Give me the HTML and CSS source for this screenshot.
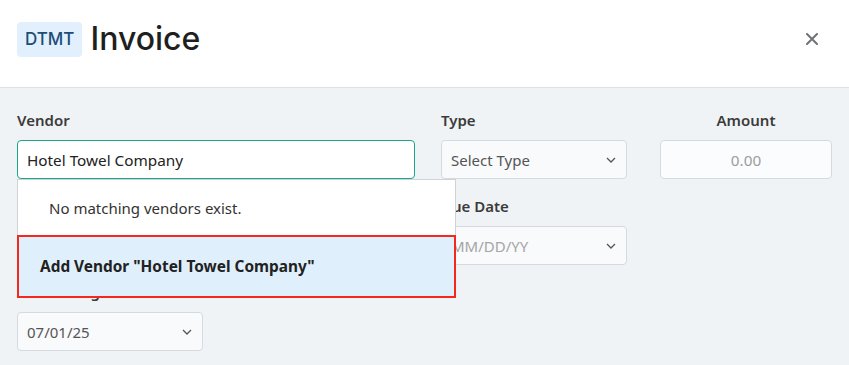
FILE: index.html
```html
<!DOCTYPE html>
<html lang="en">
<head>
	<meta charset="UTF-8">
	<meta name="viewport" content="width=device-width">
	<title>Invoice</title>
	<link rel="stylesheet" href="styles.css">
</head>
<body>
<div class="modal">
	<header class="hdr">
		<span class="badge">DTMT</span>
		<h1 class="title">Invoice</h1>
		<button class="close" aria-label="Close">
			<svg width="12" height="12" viewBox="0 0 12 12"><path d="M1 1L11 11M11 1L1 11" stroke="#6e7378" stroke-width="2" stroke-linecap="round"/></svg>
		</button>
	</header>
	<div class="form">
		<!-- row 1 -->
		<div class="field span2">
			<label class="lbl">Vendor</label>
			<div class="ctl-wrap">
				<input class="inp focus" type="text" value="Hotel Towel Company">
				<div class="menu">
					<div class="menu-empty">No matching vendors exist.</div>
					<div class="menu-add">Add Vendor "Hotel Towel Company"</div>
				</div>
			</div>
		</div>
		<div class="field">
			<label class="lbl">Type</label>
			<div class="sel">
				<span>Select Type</span>
				<svg width="10" height="6" viewBox="0 0 10 6"><path d="M1 1l4 4 4-4" fill="none" stroke="#555" stroke-width="1.3"/></svg>
			</div>
		</div>
		<div class="field amt">
			<label class="lbl center">Amount</label>
			<input class="inp num" type="text" placeholder="0.00">
		</div>
		<!-- row 2 (left part sits under the vendor menu) -->
		<div class="field span2"></div>
		<div class="field">
			<label class="lbl">Due Date</label>
			<div class="sel">
				<span class="ph">MM/DD/YY</span>
				<svg width="10" height="6" viewBox="0 0 10 6"><path d="M1 1l4 4 4-4" fill="none" stroke="#555" stroke-width="1.3"/></svg>
			</div>
		</div>
		<div></div>
		<!-- row 3 -->
		<div class="field">
			<label class="lbl">Accounting Date</label>
			<div class="sel">
				<span>07/01/25</span>
				<svg width="10" height="6" viewBox="0 0 10 6"><path d="M1 1l4 4 4-4" fill="none" stroke="#555" stroke-width="1.3"/></svg>
			</div>
		</div>
	</div>
</div>
</body>
</html>
```

FILE: styles.css
```css
*{box-sizing:border-box;margin:0;padding:0;}
body{font-family:"Noto Sans",Arial,sans-serif;color:#333;background:#f0f3f6;}
.modal{min-height:365px;background:#f0f3f6;}

.hdr{display:flex;align-items:center;height:88px;padding:0 17px 9px;background:#fff;border-bottom:1px solid #dde1e5;}
.badge{display:inline-block;height:35px;line-height:35px;padding:0 8px;border-radius:4px;background:#e1f0fc;color:#1c4c78;font-family:Inter,"Noto Sans",sans-serif;font-size:17px;font-weight:500;}
.title{margin-left:8px;font-family:Inter,"Noto Sans",sans-serif;font-size:32px;font-weight:500;line-height:1;color:#1f1f1f;}
.close{margin-left:auto;margin-right:8px;width:24px;height:24px;display:flex;align-items:center;justify-content:center;border:none;background:none;}

.form{display:grid;grid-template-columns:186px 186px 186px 1fr;column-gap:26px;row-gap:17px;padding:22px 17px 0;}
.field{display:flex;flex-direction:column;min-height:69px;}
.span2{grid-column:span 2;}
.lbl{display:block;height:20px;line-height:20px;margin-bottom:10px;font-size:15px;font-weight:600;color:#3b3b3b;}
.lbl.center{text-align:center;}
.amt{padding-left:7px;}

.inp{height:39px;width:100%;padding:0 9px;border:1px solid #d6dade;border-radius:4px;background:#fbfcfd;font-family:"Noto Sans",Arial,sans-serif;font-size:15.3px;color:#222;outline:none;}
.inp.focus{border-color:#1ba68b;background:#fff;}
.inp.num{text-align:center;}
.inp::placeholder{color:#9c9c9c;}

.sel{display:flex;align-items:center;justify-content:space-between;height:39px;padding:0 10px 0 9px;border:1px solid #d6dade;border-radius:4px;background:#f9fafc;font-size:15px;color:#555;}
.sel .ph{color:#a5a5a5;}

.ctl-wrap{position:relative;}
.menu{position:absolute;top:100%;left:0;width:439px;z-index:5;background:#fff;border:1px solid #cfd3d7;}
.menu-empty{display:flex;align-items:center;height:55px;padding-left:31px;font-size:15px;color:#333;}
.menu-add{display:flex;align-items:center;height:63px;margin:0 -1px -1px;padding-left:21px;border:2px solid #f4281c;background:#dff0fc;font-size:15.4px;font-weight:700;color:#222;}
```
